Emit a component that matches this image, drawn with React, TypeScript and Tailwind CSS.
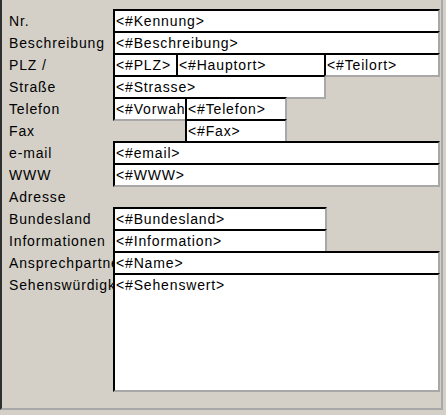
import React from "react";

const box =
  "h-[24px] shrink-0 border-2 border-t-black border-l-black border-r-[#a8a8a8] border-b-[#a8a8a8] bg-white pl-px leading-[20px] overflow-hidden whitespace-nowrap";

const Label: React.FC<{ text?: string }> = ({ text }) => (
  <div className="w-[111px] shrink-0 pl-[7px] pt-[2px] leading-[20px] overflow-hidden whitespace-nowrap">
    {text}
  </div>
);

const Row: React.FC<{ label?: string; children?: React.ReactNode }> = ({ label, children }) => (
  <div className="flex h-[22px]">
    <Label text={label} />
    {children}
  </div>
);

export default function App() {
  return (
    <div className="w-[446px] h-[415px] bg-[#d4d0c8] text-black text-[14px] tracking-[0.85px] font-['Liberation_Sans',Arial,sans-serif]">
      <div className="w-[443px] h-[410px] border-l-2 border-l-[#303030] border-r-2 border-r-[#a8a8a8] border-b-2 border-b-[#a8a8a8] pt-[9px]">
        <Row label="Nr.">
          <div className={`${box} w-[327px]`}>&lt;#Kennung&gt;</div>
        </Row>
        <Row label="Beschreibung">
          <div className={`${box} w-[327px]`}>&lt;#Beschreibung&gt;</div>
        </Row>
        <Row label="PLZ /">
          <div className={`${box} w-[65px]`}>&lt;#PLZ&gt;</div>
          <div className={`${box} w-[150px] -ml-[2px]`}>&lt;#Hauptort&gt;</div>
          <div className={`${box} w-[116px] -ml-[2px]`}>&lt;#Teilort&gt;</div>
        </Row>
        <Row label="Straße">
          <div className={`${box} w-[213px]`}>&lt;#Strasse&gt;</div>
        </Row>
        <Row label="Telefon">
          <div className={`${box} w-[74px]`}>&lt;#Vorwahl&gt;</div>
          <div className={`${box} w-[102px] -ml-[2px]`}>&lt;#Telefon&gt;</div>
        </Row>
        <Row label="Fax">
          <div className="w-[72px] shrink-0" />
          <div className={`${box} w-[102px]`}>&lt;#Fax&gt;</div>
        </Row>
        <Row label="e-mail">
          <div className={`${box} w-[327px]`}>&lt;#email&gt;</div>
        </Row>
        <Row label="WWW">
          <div className={`${box} w-[327px]`}>&lt;#WWW&gt;</div>
        </Row>
        <Row label="Adresse" />
        <Row label="Bundesland">
          <div className={`${box} w-[214px]`}>&lt;#Bundesland&gt;</div>
        </Row>
        <Row label="Informationen">
          <div className={`${box} w-[214px]`}>&lt;#Information&gt;</div>
        </Row>
        <Row label="Ansprechpartner">
          <div className={`${box} w-[327px]`}>&lt;#Name&gt;</div>
        </Row>
        <div className="flex">
          <Label text="Sehenswürdigkeiten" />
          <div className="h-[119px] w-[327px] shrink-0 border-2 border-t-black border-l-black border-r-[#a8a8a8] border-b-[#a8a8a8] bg-white pl-px leading-[20px] whitespace-nowrap overflow-hidden">
            &lt;#Sehenswert&gt;
          </div>
        </div>
      </div>
    </div>
  );
}
